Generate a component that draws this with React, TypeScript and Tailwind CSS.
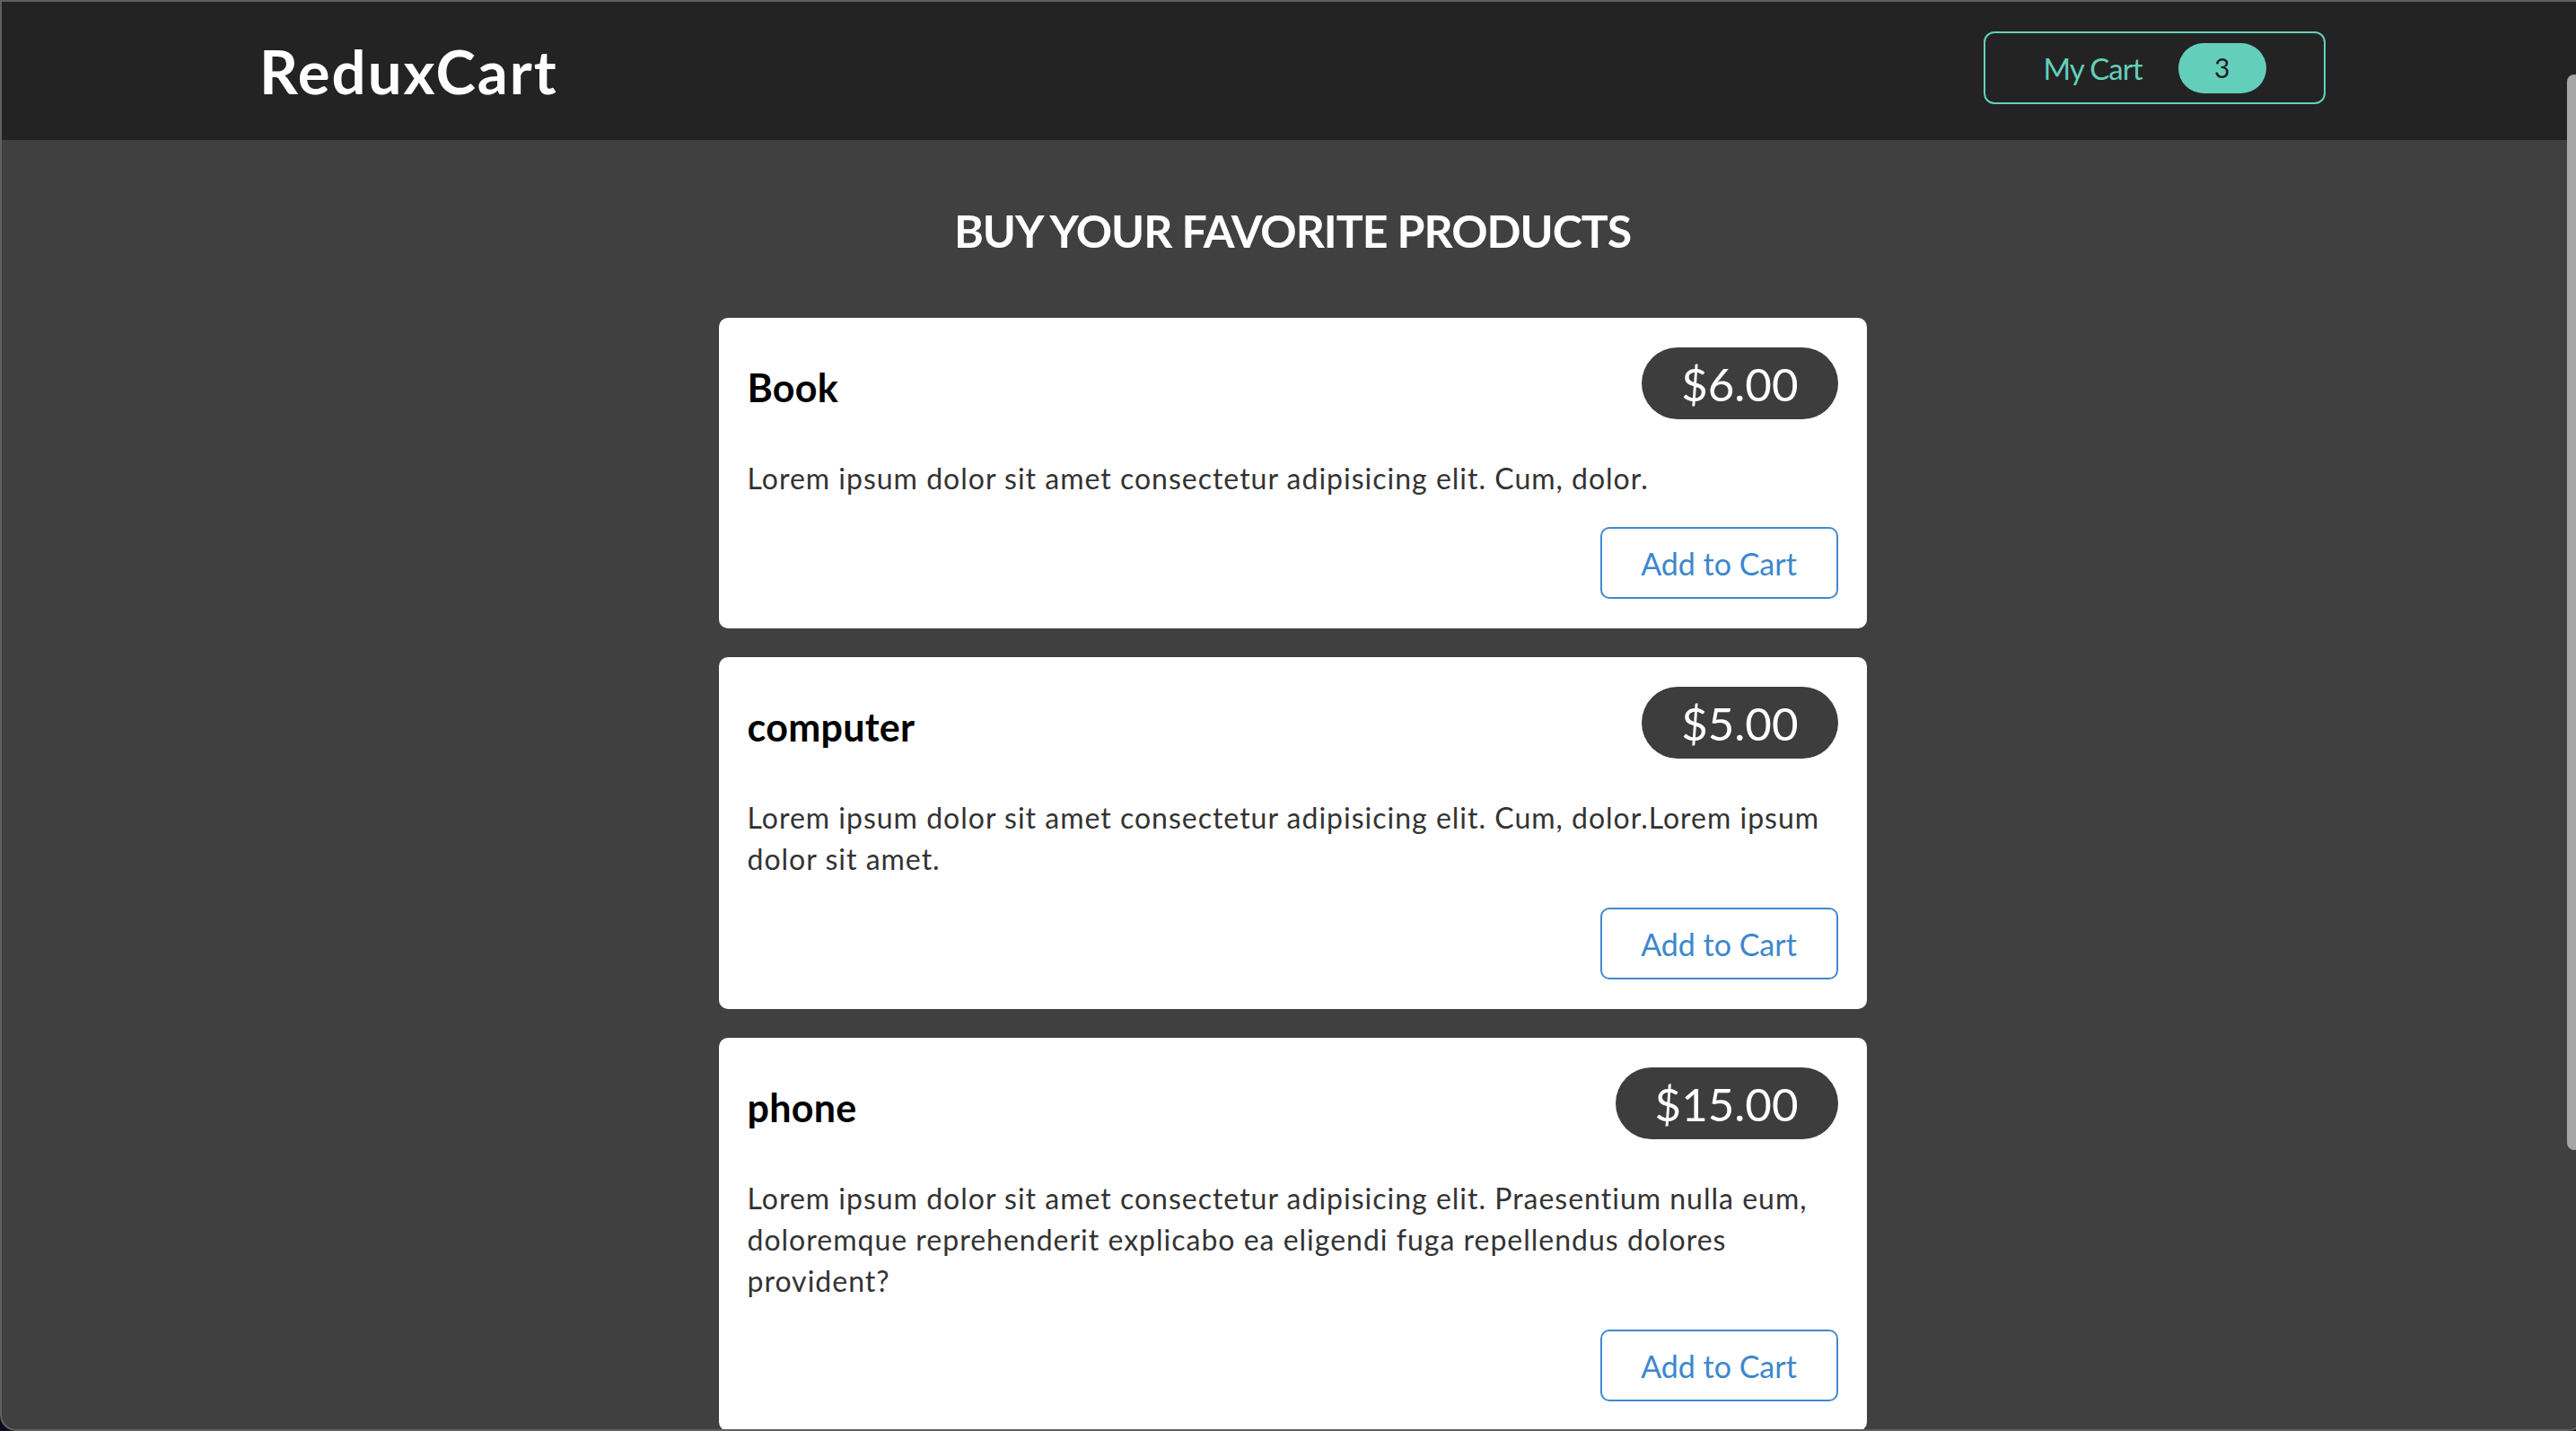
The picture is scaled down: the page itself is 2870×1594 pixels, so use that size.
import React from 'react'

interface Product {
  id: string
  title: string
  price: number
  description: string
}

const products: Product[] = [
  {
    id: 'p1',
    title: 'Book',
    price: 6,
    description: 'Lorem ipsum dolor sit amet consectetur adipisicing elit. Cum, dolor.',
  },
  {
    id: 'p2',
    title: 'computer',
    price: 5,
    description:
      'Lorem ipsum dolor sit amet consectetur adipisicing elit. Cum, dolor.Lorem ipsum dolor sit amet.',
  },
  {
    id: 'p3',
    title: 'phone',
    price: 15,
    description:
      'Lorem ipsum dolor sit amet consectetur adipisicing elit. Praesentium nulla eum, doloremque reprehenderit explicabo ea eligendi fuga repellendus dolores provident?',
  },
]

function CartButton({ quantity }: { quantity: number }) {
  return (
    <button className="mb-[7px] flex h-[81px] w-[381px] items-center justify-center gap-[40px] rounded-[12px] border-2 border-[#63cfbb] bg-transparent">
      <span className="pt-[2px] text-[33px] tracking-[-1px] text-[#63cfbb]">My Cart</span>
      <span className="flex h-[56px] w-[98px] items-center justify-center rounded-full bg-[#63cfbb] text-[30px] text-[#1e1e1e]">
        {quantity}
      </span>
    </button>
  )
}

function ProductItem({ title, price, description }: Product) {
  return (
    <li className="w-[1279px] rounded-[10px] bg-white px-[32px] pb-[33px] pt-[33px]">
      <header className="flex items-center justify-between">
        <h3 className="pt-[10px] text-[43px] font-bold tracking-[0.3px] text-black">{title}</h3>
        <div className="flex h-[80px] items-center rounded-full bg-[#3d3d3d] px-[44px] pt-[2px] text-[51px] text-white">
          ${price.toFixed(2)}
        </div>
      </header>
      <p className="mt-[43px] text-[32px] leading-[46px] tracking-[1px] text-[#333333]">{description}</p>
      <div className="mt-[31px] flex justify-end">
        <button className="flex h-[80px] w-[265px] items-center justify-center rounded-[10px] border-2 border-[#4189cf] bg-white text-[34px] text-[#3d87cc]">
          Add to Cart
        </button>
      </div>
    </li>
  )
}

export default function App() {
  return (
    <div className="h-[1594px] w-full overflow-hidden bg-[#0e0b1c] font-['Lato',sans-serif]">
      <div className="relative flex h-full w-[2880px] flex-col overflow-hidden rounded-b-[18px] border-2 border-[#5f5f5f] bg-[#404040]">
        {/* top bar */}
        <header className="flex h-[154px] shrink-0 items-center justify-between bg-[#232323] px-[287px]">
          <h1 className="text-[67px] font-bold tracking-[2px] text-white">ReduxCart</h1>
          <CartButton quantity={3} />
        </header>

        {/* products */}
        <main className="flex flex-col items-center">
          <h2 className="mt-[71px] text-[50px] leading-[60px] font-bold tracking-[-1px] text-white">
            BUY YOUR FAVORITE PRODUCTS
          </h2>
          <ul className="mt-[67px] flex flex-col gap-[32px]">
            {products.map((p) => (
              <ProductItem key={p.id} {...p} />
            ))}
          </ul>
        </main>

        {/* overlay scrollbar thumb */}
        <div className="absolute right-[2px] top-[81px] h-[1198px] w-[16px] rounded-full bg-[#a6a6a6]" />
      </div>
    </div>
  )
}
